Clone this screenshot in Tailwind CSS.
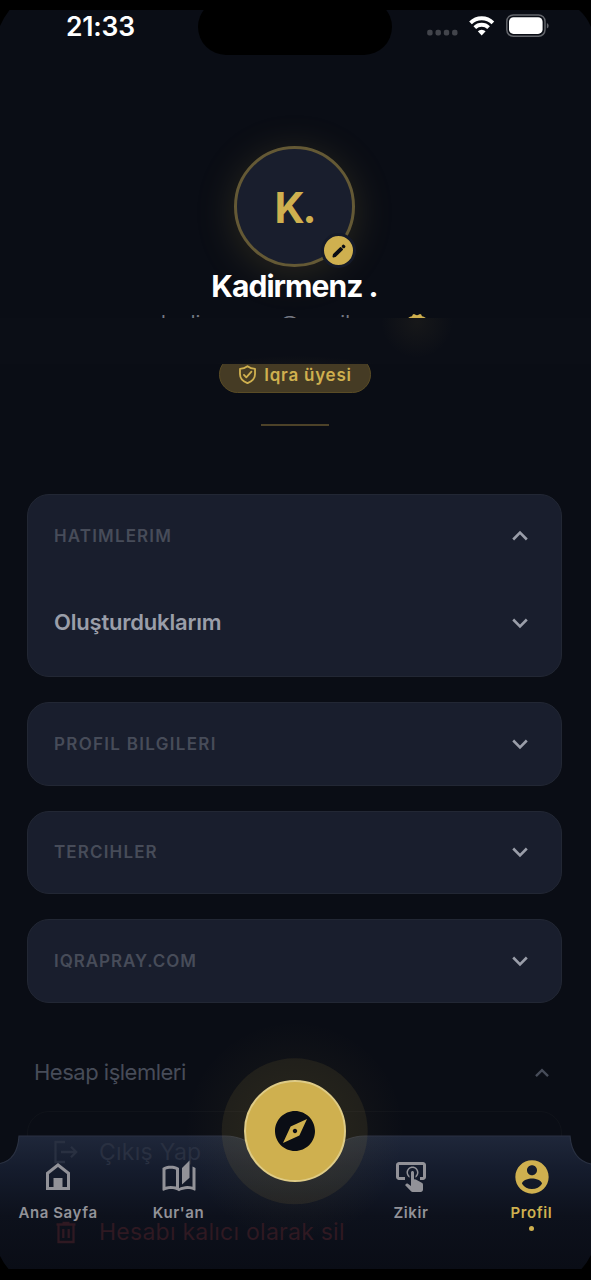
<!DOCTYPE html>
<html lang="tr">
<head>
<meta charset="utf-8">
<title>Profil</title>
<script src="https://cdn.jsdelivr.net/npm/@tailwindcss/browser@4"></script>
</head>
<body class="bg-black font-['Inter',sans-serif]">
<main class="relative h-[1280px] w-[591px] overflow-hidden bg-black pt-[10px]">
  <div class="relative flex h-[1259px] flex-col overflow-hidden bg-[#0a0d15]">

    <!-- Status bar -->
    <header class="relative flex h-[45px] shrink-0 items-start justify-between pl-[66px] pr-[42px] text-white">
      <span class="text-[26.500px] leading-[33px] font-semibold tracking-[-0.200px]">21:33</span>
      <div class="absolute left-[198px] top-0 h-[45px] w-[194px] overflow-hidden"><div class="-mt-[11px] h-[56px] w-[194px] rounded-[28px] bg-black"></div></div>
      <svg class="mt-1 h-6 w-[122px]" viewBox="427 14 122 24">
        <g fill="#42444b"><rect x="427.200" y="29.800" width="5.400" height="5.800" rx="2"/><rect x="435.500" y="29.800" width="5.400" height="5.800" rx="2"/><rect x="443.800" y="29.800" width="5.400" height="5.800" rx="2"/><rect x="452.100" y="29.800" width="5.400" height="5.800" rx="2"/></g>
        <g fill="none" stroke="#fff" stroke-width="3.800"><path d="M470.500 22.800a16 16 0 0 1 22.400 0"/><path d="M474.800 27.600a9.800 9.800 0 0 1 13.800 0"/></g>
        <path d="M481.700 35.400l-3.900-4.100a5.600 5.600 0 0 1 7.800 0z" fill="#fff"/>
        <rect x="506.800" y="14.900" width="38.200" height="21.400" rx="6.500" fill="none" stroke="#63656b" stroke-width="1.500"/>
        <rect x="509" y="17.300" width="33.600" height="16.600" rx="4.500" fill="#fff"/>
        <path d="M546.900 23v5.500q1.800-.8 1.800-2.700t-1.800-2.800z" fill="#63656b"/>
      </svg>
    </header>

    <!-- Profile summary -->
    <section class="relative flex h-[429px] shrink-0 flex-col items-center pt-[91px]">
      <div class="relative -left-px flex size-[121px] shrink-0 items-center justify-center rounded-full border-[3px] border-[#645935] bg-[#191e2d] shadow-[0_6px_40px_rgba(207,176,79,0.17)]">
        <span class="pt-[2px] text-[42px] leading-none font-bold tracking-[-2px] text-[#cfb04f]">K.</span>
        <div class="absolute -right-[4px] -bottom-[4px] flex size-[35px] items-center justify-center rounded-full border-[3px] border-[#151a29] bg-[#cfb04f]">
          <svg class="size-[14px]" viewBox="0 0 14 14" fill="#0a0d15" stroke="#0a0d15" stroke-linejoin="round" stroke-linecap="round"><path d="M1.300 12.700l.4-2.100L8.600 3.800l1.600 1.600-6.900 6.900z" stroke-width="1.600"/><path d="M11.400 2.300l.3.300" stroke-width="3.300" fill="none"/></svg>
        </div>
      </div>
      <h1 class="relative -left-px pt-px text-[30px] leading-[37px] font-bold tracking-[-0.95px] text-white">Kadirmenz .</h1>
      <div class="mt-[2px] flex h-[11px] w-full overflow-hidden pl-[161px] text-[20px] leading-[32px] text-[#747883]">
        <span class="w-[119px]">kadirmenz</span><span class="w-[126px]">@gmail.com</span>
        <svg class="mt-[6px] h-4 w-[22px]" viewBox="0 0 22 16" fill="#cfb04f"><path d="M1.500 5.500Q4 3.500 6 3.300L6.800 1.500Q8 .5 9 1.500Q11 2.800 13 1.500Q14 .5 15.200 1.500L16 3.300Q18 3.500 20.500 5.500V16h-19z"/></svg>
      </div>
      <div class="h-[46px] w-full shrink-0 bg-[radial-gradient(circle_at_417px_4px,rgba(207,176,79,0.06),transparent_36px),radial-gradient(ellipse_at_295px_60px,rgba(207,176,79,0.07),transparent_110px)] bg-[#0b0e16]"></div>
      <div class="relative -left-px h-[29px] w-[152px] shrink-0 overflow-hidden">
        <div class="-mt-[8px] flex h-[37px] items-start justify-center gap-[7px] rounded-full border border-[#5a4c26] bg-[#453b24] pt-[8px] pl-px text-[#cfb04f]">
          <svg class="size-[19px]" viewBox="0 0 24 24" fill="none" stroke="currentColor" stroke-width="2.300" stroke-linejoin="round"><path d="M12 1.500Q16 4.500 21.500 5v6.500C21.500 17 17.500 21 12 23 6.500 21 2.500 17 2.500 11.500V5Q8 4.500 12 1.500z"/><path d="M7.500 12.500l3 3 6.500-7" stroke-linecap="round"/></svg>
          <span class="text-[17px] leading-[21px] font-semibold tracking-[0.75px]">Iqra üyesi</span>
        </div>
      </div>
      <div class="relative -left-px mt-[31px] h-[2px] w-[68px] shrink-0 bg-[#4d4228]"></div>
    </section>

    <!-- Sections -->
    <section class="flex shrink-0 flex-col gap-[25px] pl-[27px] pr-[29px] pt-[10px] text-[17px] font-semibold tracking-[1.150px] text-[#474c59]">
      <div class="h-[183px] rounded-[22px] border-[1.5px] border-[#222734] bg-[#191e2d] pl-[26px] pr-[32px]">
        <div class="flex h-[82px] items-center justify-between"><h2 class="pt-px">HATIMLERIM</h2><svg class="size-[18px] text-[#9a9ea9]" viewBox="0 0 18 18" fill="none" stroke="currentColor" stroke-width="2.600"><path d="M2.200 12.500L9 5.700l6.800 6.800"/></svg></div>
        <div class="flex h-[91px] items-center justify-between text-[22px] tracking-[-0.200px] text-[#9a9ea9]"><span>Oluşturduklarım</span><svg class="size-[18px] text-[#9a9ea9]" viewBox="0 0 18 18" fill="none" stroke="currentColor" stroke-width="2.600"><path d="M2.200 5.500L9 12.300l6.800-6.800"/></svg></div>
      </div>
      <div class="flex h-[83.500px] items-center justify-between rounded-[22px] border-[1.5px] border-[#222734] bg-[#191e2d] pl-[26px] pr-[32px]"><h2 class="pt-px tracking-[1.300px]">PROFIL BILGILERI</h2><svg class="size-[18px] text-[#9a9ea9]" viewBox="0 0 18 18" fill="none" stroke="currentColor" stroke-width="2.600"><path d="M2.200 5.500L9 12.300l6.800-6.800"/></svg></div>
      <div class="flex h-[83.500px] items-center justify-between rounded-[22px] border-[1.5px] border-[#222734] bg-[#191e2d] pl-[26px] pr-[32px]"><h2 class="pt-px">TERCIHLER</h2><svg class="size-[18px] text-[#9a9ea9]" viewBox="0 0 18 18" fill="none" stroke="currentColor" stroke-width="2.600"><path d="M2.200 5.500L9 12.300l6.800-6.800"/></svg></div>
      <div class="flex h-[83.500px] items-center justify-between rounded-[22px] border-[1.5px] border-[#222734] bg-[#191e2d] pl-[26px] pr-[32px]"><h2 class="pt-px tracking-[0.950px]">IQRAPRAY.COM</h2><svg class="size-[18px] text-[#9a9ea9]" viewBox="0 0 18 18" fill="none" stroke="currentColor" stroke-width="2.600"><path d="M2.200 5.500L9 12.300l6.800-6.800"/></svg></div>
    </section>

    <!-- Account actions -->
    <section class="shrink-0 pl-[27px] pr-[29px] pt-[50px]">
      <div class="flex h-[40px] items-center justify-between pl-[7px] pr-[12px] text-[22px] tracking-[-0.500px] text-[#474c59]"><span>Hesap işlemleri</span><svg class="size-4" viewBox="0 0 18 18" fill="none" stroke="currentColor" stroke-width="2.600"><path d="M2.200 12.500L9 5.700l6.800 6.800"/></svg></div>
      <div class="mt-[18px] h-[170px] rounded-[22px] border border-[#10131a] pl-[26px]"></div>
    </section>

    <!-- Bottom navigation -->
    <nav class="absolute inset-x-0 bottom-0 h-[211px]">
      <svg class="absolute inset-0 overflow-visible" width="591" height="211" viewBox="0 1058 591 211">
        <defs>
          <linearGradient id="bar" x1="0" y1="1136" x2="0" y2="1269" gradientUnits="userSpaceOnUse"><stop offset="0" stop-color="#1f273a"/><stop offset=".25" stop-color="#151c2d"/><stop offset=".6" stop-color="#0d111c"/><stop offset="1" stop-color="#0a0d16"/></linearGradient>
          <radialGradient id="glow" cx="294.500" cy="1131" r="110" gradientUnits="userSpaceOnUse"><stop offset=".5" stop-color="#cfb04f" stop-opacity=".04"/><stop offset="1" stop-color="#cfb04f" stop-opacity="0"/></radialGradient>
        </defs>
        <path d="M0 1163.500Q17.500 1160 19 1136H225Q236 1136 246 1141Q262 1181 294.500 1181Q327 1181 344 1141Q354 1136 365 1136H570Q572 1160 591 1164V1269H0z" fill="url(#bar)"/>
        <path d="M0 1163.500Q17.500 1160 19 1136H225Q236 1136 246 1141M344 1141Q354 1136 365 1136H570Q572 1160 591 1164" fill="none" stroke="#2a3142" stroke-width="1.200"/>
        <circle cx="294.500" cy="1131" r="110" fill="url(#glow)"/>
        <circle cx="294.700" cy="1131.300" r="73" fill="#cfb04f" fill-opacity=".09"/>
      </svg>
      <div class="absolute left-[53px] top-[78px] flex flex-col text-[23px] leading-[32px] tracking-[0.250px]">
        <div class="flex h-[32px] items-center gap-[21px] text-[#293041]"><svg class="size-[25px]" viewBox="0 0 25 25" fill="none" stroke="currentColor" stroke-width="2.300"><path d="M12 2H2.500v20H12M8 12h15M18 6.800l5.200 5.200-5.200 5.200"/></svg><span>Çıkış Yap</span></div>
        <div class="mt-12 flex h-[32px] items-center gap-[21px] text-[#2f1922]"><svg class="size-[25px]" viewBox="0 0 25 25" fill="none" stroke="currentColor" stroke-width="2.300"><path d="M3.500 4.500h19M5.500 4.500V22h15V4.500M9.500 3h7M10.300 9v9M15.700 9v9"/></svg><span>Hesabı kalıcı olarak sil</span></div>
      </div>
      <div class="relative flex h-full items-end pb-[46px] text-[15px] leading-[20px] font-semibold tracking-[0.600px] text-[#929298]">
        <div class="flex w-[116px] flex-col items-center gap-2"><svg class="size-[36px]" viewBox="0 0 36 36"><path d="M7.500 29.500V14.200L18 6l10.500 8.200v15.300z" fill="none" stroke="currentColor" stroke-width="3"/><path d="M13.500 19h9v10h-9z" fill="currentColor"/></svg><span>Ana Sayfa</span></div>
        <div class="flex w-[125px] flex-col items-center gap-2"><svg class="size-[36px]" viewBox="0 0 24 24" fill="currentColor"><path d="M19 1L14 6V17L19 12.500V1M21 5V18.500C19.900 18.150 18.700 18 17.500 18C15.800 18 13.350 18.650 12 19.500V6C10.550 4.900 8.450 4.500 6.500 4.500C4.550 4.500 2.450 4.900 1 6V20.650C1 20.900 1.250 21.150 1.500 21.150C1.600 21.150 1.650 21.100 1.750 21.100C3.100 20.450 5.050 20 6.500 20C8.450 20 10.550 20.400 12 21.500C13.350 20.650 15.800 20 17.500 20C19.150 20 20.850 20.300 22.250 21.050C22.350 21.100 22.400 21.100 22.500 21.100C22.750 21.100 23 20.850 23 20.600V6C22.400 5.550 21.750 5.250 21 5M10 18.410C8.750 18.090 7.500 18 6.500 18C5.440 18 4.180 18.190 3 18.500V7.130C3.910 6.730 5.140 6.500 6.500 6.500C7.860 6.500 9.090 6.730 10 7.130V18.410Z"/></svg><span>Kur'an</span></div>
        <div class="flex w-[107px] justify-center self-start pt-[22px]"><div class="flex size-[102px] shrink-0 items-center justify-center rounded-full border-[2.500px] border-[#decb86] bg-[#cfb04f]"><svg class="size-12 text-[#0a0d15]" viewBox="0 0 24 24" fill="currentColor"><path d="M12 10.900c-.61 0-1.100.49-1.100 1.100s.49 1.100 1.100 1.100c.61 0 1.100-.49 1.100-1.100s-.49-1.100-1.100-1.100zM12 2C6.480 2 2 6.480 2 12s4.480 10 10 10 10-4.480 10-10S17.520 2 12 2zm2.190 12.190L6 18l3.810-8.190L18 6l-3.810 8.190z"/></svg></div></div>
        <div class="flex w-[126px] flex-col items-center gap-2"><svg class="size-[36px]" viewBox="0 0 24 24" fill="currentColor"><path d="M13 5C15.210 5 17 6.790 17 9C17 10.500 16.200 11.770 15 12.460V11.240C15.610 10.690 16 9.890 16 9C16 7.340 14.660 6 13 6S10 7.340 10 9C10 9.890 10.390 10.690 11 11.240V12.460C9.800 11.770 9 10.500 9 9C9 6.790 10.790 5 13 5M20 20.500C19.970 21.320 19.320 21.970 18.500 22H13C12.620 22 12.260 21.850 12 21.570L8 17.370L8.740 16.600C8.930 16.390 9.200 16.280 9.500 16.280H9.700L12 18V9C12 8.450 12.450 8 13 8S14 8.450 14 9V13.470L15.210 13.600L19.150 15.790C19.680 16.030 20 16.560 20 17.140V20.500M20 2H4C2.900 2 2 2.900 2 4V12C2 13.110 2.900 14 4 14H8V12L4 12L4 4H20L20 12H18V14H20V13.970L20.040 14C21.130 14 22 13.090 22 12V4C22 2.900 21.110 2 20 2Z"/></svg><span>Zikir</span></div>
        <div class="relative flex w-[115px] flex-col items-center gap-[6px] text-[#cfb04f]"><svg class="size-10" viewBox="0 0 24 24" fill="currentColor"><path d="M12 2C6.480 2 2 6.480 2 12s4.480 10 10 10 10-4.480 10-10S17.520 2 12 2zm0 3c1.660 0 3 1.340 3 3s-1.340 3-3 3-3-1.340-3-3 1.340-3 3-3zm0 14.200c-2.500 0-4.710-1.280-6-3.220.03-1.990 4-3.080 6-3.080 1.990 0 5.970 1.090 6 3.080-1.290 1.940-3.500 3.220-6 3.220z"/></svg><span>Profil</span><i class="absolute -bottom-[8px] size-[5px] rounded-full bg-[#cfb04f]"></i></div>
      </div>
    </nav>

    <!-- Screen corners -->
    <svg class="absolute inset-0" width="591" height="1259" viewBox="0 10 591 1259" fill="#000"><path d="M0 10H9.500Q4 17 0 26zM591 10h-12q8 7 12 17zM0 1256q4 8 8.500 13H0zM591 1255q-4 8-9.500 14h9.500z"/></svg>
  </div>
</main>
</body>
</html>
